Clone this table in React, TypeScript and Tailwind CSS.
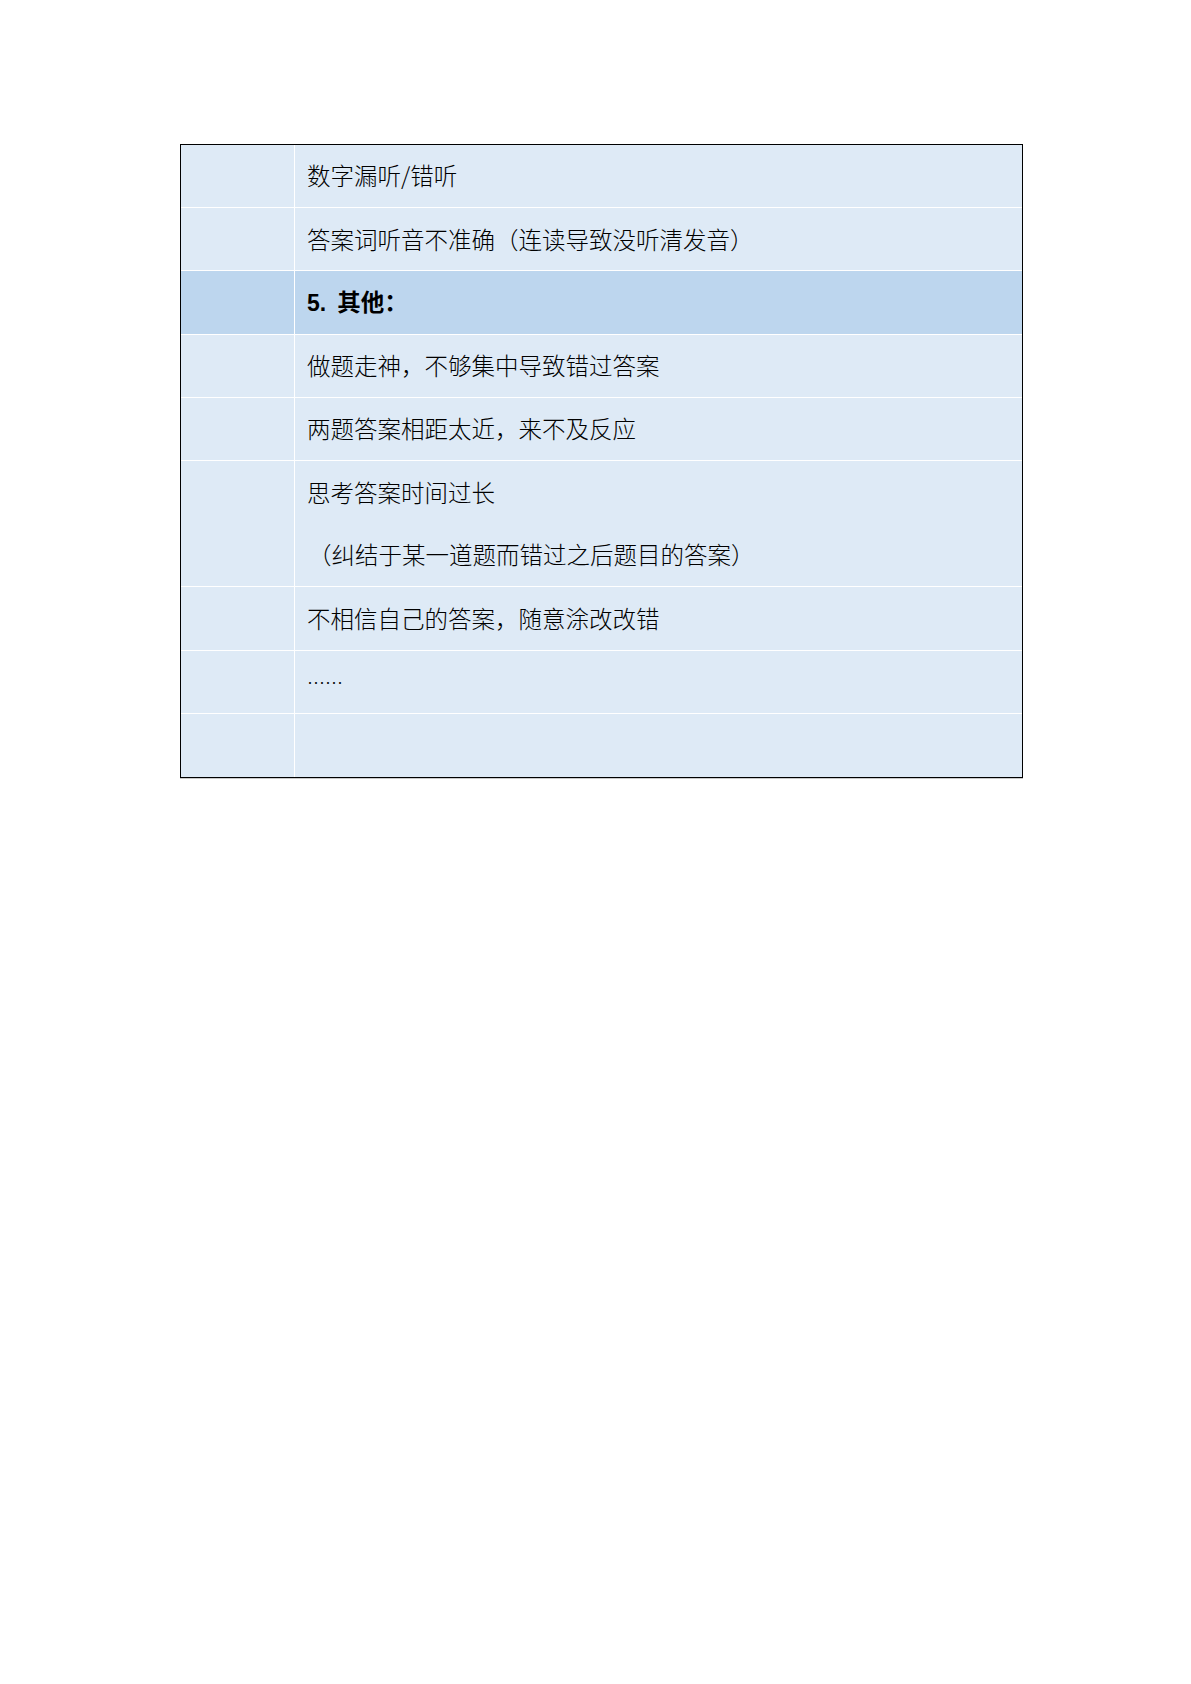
import React from "react";

const font = { fontFamily: '"Noto Sans CJK SC", "Liberation Sans", sans-serif' };

type Row = { lines: React.ReactNode[]; header?: boolean; tall?: boolean; dots?: boolean };

const rows: Row[] = [
  { lines: ["数字漏听/错听"] },
  { lines: ["答案词听音不准确（连读导致没听清发音）"] },
  { lines: ["5. 其他："], header: true },
  { lines: ["做题走神，不够集中导致错过答案"] },
  { lines: ["两题答案相距太近，来不及反应"] },
  { lines: ["思考答案时间过长", "（纠结于某一道题而错过之后题目的答案）"], tall: true },
  { lines: ["不相信自己的答案，随意涂改改错"] },
  { lines: [""], dots: true },
  { lines: [""] },
];

export default function App() {
  return (
    <div className="min-h-[1684px] w-[1191px] bg-white pt-[144px] pl-[180px]" style={font}>
      <div className="w-[843px] border border-black shadow-[0_1px_0_#c9c9c9] bg-[#DEEAF6]">
        {rows.map((r, i) => (
          <div
            key={i}
            className={`flex ${i < rows.length - 1 ? "border-b border-white" : ""} ${
              r.header ? "bg-[#BDD6EE]" : "bg-[#DEEAF6]"
            } ${r.tall ? "h-[126.4px]" : "h-[63.2px]"}`}
          >
            <div className="w-[114px] shrink-0 border-r border-white" />
            <div className="flex-1 pl-[12px] flex flex-col">
              {r.lines.map((l, j) => (
                <div
                  key={j}
                  className={`flex-1 flex items-center text-[23.5px] leading-none text-black ${
                    r.header ? "font-bold" : "font-light"
                  } ${r.tall && j === 1 ? "pl-[1px]" : ""}`}
                >
                  {r.header ? (
                    <span>
                      <span style={{ fontFamily: '"Liberation Sans", sans-serif' }} className="text-[23px]">
                        5.
                      </span>
                      <span className="ml-[11px]">其他：</span>
                    </span>
                  ) : r.dots ? (
                    <span
                      className="text-[18px] leading-none text-[#111]"
                      style={{ fontFamily: '"Liberation Sans", sans-serif' }}
                    >
                      ······
                    </span>
                  ) : (
                    l
                  )}
                </div>
              ))}
            </div>
          </div>
        ))}
      </div>
    </div>
  );
}
